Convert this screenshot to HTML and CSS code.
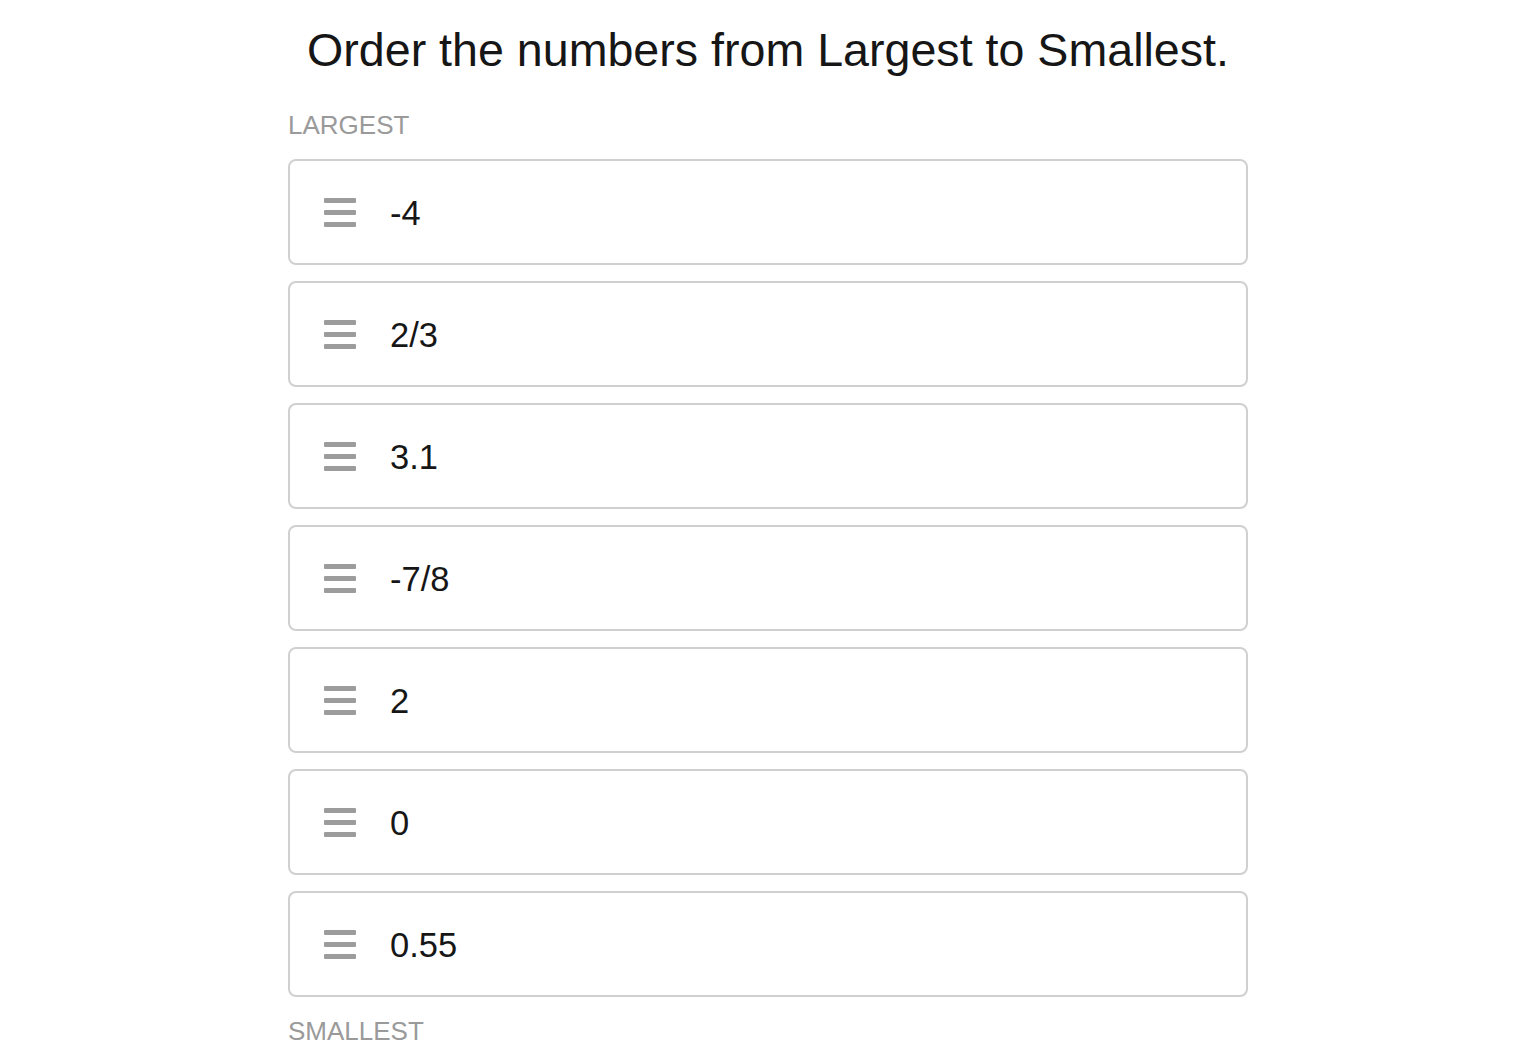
FILE: index.html
```html
<!DOCTYPE html>
<html>
<head>
<meta charset="utf-8">
<link rel="stylesheet" href="styles.css">
</head>
<body>
<div class="wrap">
  <h1 class="title">Order the numbers from Largest to Smallest.</h1>
  <div class="label label-top">LARGEST</div>
  <ul class="list">
    <li class="item"><span class="handle"><i></i><i></i><i></i></span><span class="val">-4</span></li>
    <li class="item"><span class="handle"><i></i><i></i><i></i></span><span class="val">2/3</span></li>
    <li class="item"><span class="handle"><i></i><i></i><i></i></span><span class="val">3.1</span></li>
    <li class="item"><span class="handle"><i></i><i></i><i></i></span><span class="val">-7/8</span></li>
    <li class="item"><span class="handle"><i></i><i></i><i></i></span><span class="val">2</span></li>
    <li class="item"><span class="handle"><i></i><i></i><i></i></span><span class="val">0</span></li>
    <li class="item"><span class="handle"><i></i><i></i><i></i></span><span class="val">0.55</span></li>
  </ul>
  <div class="label label-bottom">SMALLEST</div>
</div>
</body>
</html>
```
FILE: styles.css
```css
html, body {
  margin: 0;
  padding: 0;
  background: #fff;
}
body {
  font-family: "Liberation Sans", Arial, sans-serif;
  color: #111;
}
.wrap {
  width: 960px;
  margin: 0 auto;
  padding-top: 22px;
}
.title {
  margin: 0;
  font-weight: normal;
  font-size: 46.6px;
  line-height: 56px;
  text-align: center;
  color: #161616;
}
.label {
  font-size: 26px;
  line-height: 30px;
  color: #9a9a9a;
}
.label-top {
  margin-top: 32px;
  margin-bottom: 19px;
}
.label-bottom {
  margin-top: 19px;
}
.list {
  list-style: none;
  margin: 0;
  padding: 0;
  display: flex;
  flex-direction: column;
  gap: 16px;
}
.item {
  box-sizing: border-box;
  height: 106px;
  border: 2px solid #d0d0d0;
  border-radius: 8px;
  display: flex;
  align-items: center;
  padding-left: 34px;
}
.handle {
  display: flex;
  flex-direction: column;
  gap: 7px;
  width: 32px;
  margin-right: 34px;
}
.handle i {
  display: block;
  height: 5px;
  background: #9c9c9c;
  border-radius: 1px;
}
.val {
  font-size: 34.5px;
  color: #161616;
  position: relative;
  top: 1px;
}
```
